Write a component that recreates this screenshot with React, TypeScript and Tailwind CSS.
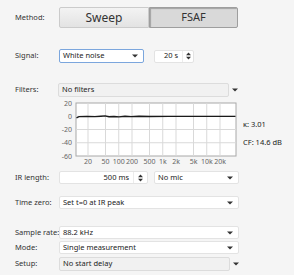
import React from "react";

const font = { fontFamily: '"Noto Sans", "Open Sans", sans-serif' };

const Arrow = () => (
  <svg width="6" height="4" viewBox="0 0 6 4" className="shrink-0">
    <path d="M0 0.5 L6 0.5 L3 3.5 Z" fill="#333" />
  </svg>
);

const SpinArrows = () => (
  <svg width="5" height="8" viewBox="0 0 5 8" className="shrink-0">
    <path d="M0 3.3 L5 3.3 L2.5 0.5 Z" fill="#333" />
    <path d="M0 4.7 L5 4.7 L2.5 7.5 Z" fill="#333" />
  </svg>
);

const Label = ({ children }: { children: React.ReactNode }) => (
  <div className="w-[43px] pl-[15px] box-content shrink-0 text-[7.5px] text-[#333] whitespace-nowrap">{children}</div>
);

const Select = ({ text, w, h = 13, focus = false }: { text: string; w: number; h?: number; focus?: boolean }) => (
  <div
    className={`flex items-center justify-between pl-[3px] pr-[5px] bg-white rounded-[2px] border ${focus ? "border-[#7ba6dd]" : "border-[#e3e3e3]"}`}
    style={{ width: w, height: h }}
  >
    <span className="text-[7.5px] text-[#222] whitespace-nowrap">{text}</span>
    <Arrow />
  </div>
);

const Disabled = ({ text, w, h = 14 }: { text: string; w: number; h?: number }) => (
  <div className="flex items-center">
    <div className="flex items-center pl-[3px] bg-[#f1f1f1] border border-[#dcdcdc] rounded-[2px]" style={{ width: w, height: h }}>
      <span className="text-[7.5px] text-[#222] whitespace-nowrap">{text}</span>
    </div>
    <div className="ml-[3px]">
      <Arrow />
    </div>
  </div>
);

const Spin = ({ text, w, divAt }: { text: string; w: number; divAt: number }) => (
  <div className="flex items-stretch bg-white rounded-[2px] border border-[#e3e3e3] h-[13px]" style={{ width: w }}>
    <div className="flex items-center justify-end pr-[4px] border-r border-[#ececec]" style={{ width: divAt }}>
      <span className="text-[7.5px] text-[#222] whitespace-nowrap">{text}</span>
    </div>
    <div className="flex-1 flex items-center justify-center">
      <SpinArrows />
    </div>
  </div>
);

const fx = (f: number) => 29 + (Math.log10(f) - Math.log10(20)) * 44;
const ticks: [number, string][] = [
  [20, "20"], [50, "50"], [100, "100"], [200, "200"], [500, "500"],
  [1000, "1k"], [2000, "2k"], [5000, "5k"], [10000, "10k"], [20000, "20k"],
];
const dbs = [20, 0, -20, -40, -60];
const dy = (d: number) => 5 + ((20 - d) / 80) * 53;

const Chart = () => (
  <svg width="180" height="70" viewBox="0 0 180 70" style={font}>
    <rect x="17" y="5" width="160" height="53" fill="white" stroke="#a8a8a8" strokeWidth="1" />
    {dbs.slice(1, 4).map((d) => (
      <line key={d} x1="17" x2="177" y1={dy(d)} y2={dy(d)} stroke="#d9d9d9" strokeWidth="1" />
    ))}
    {ticks.map(([f]) => (
      <line key={f} x1={fx(f)} x2={fx(f)} y1="5" y2="58" stroke="#d9d9d9" strokeWidth="1" />
    ))}
    {dbs.map((d) => (
      <text key={d} x="13" y={dy(d) + 2.5} fontSize="7" fill="#666" textAnchor="end">
        {d}
      </text>
    ))}
    {ticks.map(([f, l]) => (
      <text key={l} x={fx(f)} y="66" fontSize="7" fill="#666" textAnchor="middle">
        {l}
      </text>
    ))}
    <path
      d="M17.5 19.8 L20 18.6 L28 18.4 L36 18.6 L42 18.2 L46 17.9 L50 18.8 L55 18.5 L60 18.9 L66 18.2 L72 18.6 L80 18.3 L90 18.5 L110 18.4 L140 18.4 L176.5 18.4"
      fill="none"
      stroke="#1a1a1a"
      strokeWidth="1.4"
    />
  </svg>
);

export default function App() {
  return (
    <div className="w-[294px] h-[275px] bg-[#f5f5f5] overflow-hidden flex flex-col" style={font}>
      <div className="flex items-center mt-[7px] h-[21px]">
        <Label>Method:</Label>
        <div className="ml-[1px] w-[90px] h-full flex items-center justify-center rounded-l-[2px] border border-[#cbcbcb] bg-gradient-to-b from-[#f3f3f3] to-[#e3e3e3] text-[12px] text-[#333]">
          Sweep
        </div>
        <div className="w-[89px] h-full flex items-center justify-center rounded-r-[2px] border border-[#9e9e9e] bg-[#d9d9d9] shadow-[inset_1px_1px_1px_rgba(0,0,0,0.25)] text-[11px] text-[#333]">
          FSAF
        </div>
      </div>

      <div className="flex items-center mt-[21px] h-[14px]">
        <Label>Signal:</Label>
        <div className="ml-[1px]">
          <Select text="White noise" w={85} h={14} focus />
        </div>
        <div className="ml-[10px]">
          <Spin text="20 s" w={40} divAt={28} />
        </div>
      </div>

      <div className="flex items-center mt-[20px] h-[14px]">
        <Label>Filters:</Label>
        <Disabled text="No filters" w={171} />
      </div>

      <div className="flex items-start mt-[1px]">
        <div className="w-[59px] shrink-0" />
        <Chart />
        <div className="ml-[4px] mt-[21px] flex flex-col gap-[7px] text-[7.5px] text-[#222] whitespace-nowrap">
          <span>κ: 3.01</span>
          <span>CF: 14.6 dB</span>
        </div>
      </div>

      <div className="flex items-center mt-[3px] h-[13px]">
        <Label>IR length:</Label>
        <div className="ml-[1px]">
          <Spin text="500 ms" w={89} divAt={74} />
        </div>
        <div className="ml-[6px]">
          <Select text="No mic" w={85} />
        </div>
      </div>

      <div className="flex items-center mt-[12px] h-[13px]">
        <Label>Time zero:</Label>
        <div className="ml-[1px]">
          <Select text="Set t=0 at IR peak" w={180} />
        </div>
      </div>

      <div className="flex items-center mt-[17px] h-[13px]">
        <Label>Sample rate:</Label>
        <div className="ml-[1px]">
          <Select text="88.2 kHz" w={180} />
        </div>
      </div>

      <div className="flex items-center mt-[2px] h-[13px]">
        <Label>Mode:</Label>
        <div className="ml-[1px]">
          <Select text="Single measurement" w={180} />
        </div>
      </div>

      <div className="flex items-center mt-[3px] h-[14px]">
        <Label>Setup:</Label>
        <div className="ml-[1px]">
          <Disabled text="No start delay" w={171} />
        </div>
      </div>
    </div>
  );
}
